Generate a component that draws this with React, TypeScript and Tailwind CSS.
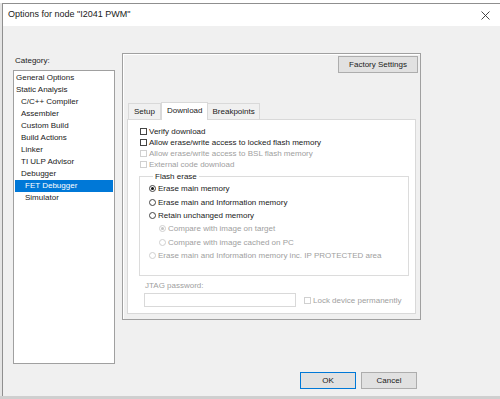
import React from "react";

const dim = "text-[#a0a0a0]";

const Check = ({ disabled }: { disabled?: boolean }) => (
  <span
    className={`block w-[7px] h-[7px] border bg-white shrink-0 ${disabled ? "border-[#d0d0d0]" : "border-[#444444]"}`}
  />
);

const Radio = ({ checked, disabled }: { checked?: boolean; disabled?: boolean }) => (
  <span
    className={`flex w-[7px] h-[7px] rounded-full border bg-white shrink-0 items-center justify-center ${disabled ? "border-[#cfcfcf]" : "border-[#444444]"}`}
  >
    {checked && <span className={`block w-[3px] h-[3px] rounded-full ${disabled ? "bg-[#c4c4c4]" : "bg-[#111111]"}`} />}
  </span>
);

const categories = [
  { label: "General Options", level: 0 },
  { label: "Static Analysis", level: 0 },
  { label: "C/C++ Compiler", level: 1 },
  { label: "Assembler", level: 1 },
  { label: "Custom Build", level: 1 },
  { label: "Build Actions", level: 1 },
  { label: "Linker", level: 1 },
  { label: "TI ULP Advisor", level: 1 },
  { label: "Debugger", level: 1 },
  { label: "FET Debugger", level: 2, selected: true },
  { label: "Simulator", level: 2 },
];

const CheckRow = ({ label, disabled }: { label: string; disabled?: boolean }) => (
  <div className={`flex items-center gap-[2px] h-[11px] ${disabled ? dim : "text-[#1a1a1a]"}`}>
    <Check disabled={disabled} />
    <span>{label}</span>
  </div>
);

const RadioRow = ({ label, checked, disabled, indent }: { label: string; checked?: boolean; disabled?: boolean; indent?: boolean }) => (
  <div className={`flex items-center gap-[2px] h-[13.4px] ${indent ? "pl-[10px]" : ""} ${disabled ? dim : "text-[#1a1a1a]"}`}>
    <Radio checked={checked} disabled={disabled} />
    <span>{label}</span>
  </div>
);

export default function App() {
  return (
    <div className="w-[500px] h-[399px] overflow-hidden bg-[#e4e4e4] font-['Liberation_Sans',Arial,sans-serif] flex flex-col">
      <div className="h-[3px] bg-white shrink-0" />
      <div className="ml-[2px] w-[600px] h-[393px] shrink-0 border-l border-t border-[#8f8f8f] bg-[#f0f0f0] flex flex-col">
        {/* title bar */}
        <div className="h-[22px] bg-white flex items-center shrink-0">
          <span className="pl-[5px] text-[9px] text-[#1a1a1a]">Options for node "I2041 PWM"</span>
          <svg className="ml-[351px]" width="9" height="9" viewBox="0 0 9 9">
            <path d="M0.5 0.5 L8.5 8.5 M8.5 0.5 L0.5 8.5" stroke="#333" strokeWidth="0.9" />
          </svg>
        </div>

        {/* body */}
        <div className="flex-1 flex flex-col text-[8px] leading-[11px] text-[#1a1a1a]">
          <div className="flex pt-[27px] pl-[10px]">
            {/* category column */}
            <div className="w-[102px] flex flex-col">
              <div className="h-[12px] mt-[2px] pl-[2px] leading-[12px]">Category:</div>
              <div className="mt-[3px] h-[294px] border border-[#a0a0a0] bg-white pt-[1px] px-[1px]">
                {categories.map((c) => (
                  <div
                    key={c.label}
                    className={`h-[12px] leading-[12px] ${c.selected ? "bg-[#0078d7] text-white" : ""} ${c.level === 0 ? "pl-[1px]" : c.level === 1 ? "pl-[6px]" : "pl-[10px]"}`}
                  >
                    {c.label}
                  </div>
                ))}
              </div>
            </div>

            {/* options group */}
            <div className="ml-[7px] w-[299px] h-[267px] border border-[#a0a0a0] shadow-[inset_1px_1px_0_#ffffff] flex flex-col px-[4px]">
              <div className="flex justify-end pt-[2px] -mr-[2px]">
                <div className="w-[80px] h-[17px] bg-[#e1e1e1] border border-[#adadad] flex items-center justify-center">
                  Factory Settings
                </div>
              </div>

              {/* tabs */}
              <div className="mt-[28px] flex items-end h-[18px] pl-[1px] relative z-10">
                <div className="h-[16px] px-[5px] flex items-center border border-b-0 border-[#d9d9d9] bg-[#f0f0f0]">Setup</div>
                <div className="h-[18px] px-[5px] flex items-center border border-b-0 border-[#d9d9d9] bg-white -mb-[1px] pb-[3px]">Download</div>
                <div className="h-[16px] px-[4px] flex items-center border border-b-0 border-l-0 border-[#d9d9d9] bg-[#f0f0f0]">Breakpoints</div>
              </div>
              <div className="h-[195px] border border-[#d9d9d9] bg-white flex flex-col pt-[6px] pl-[11px] pr-[6px]">
                <div className="pl-[1px]">
                  <CheckRow label="Verify download" />
                  <CheckRow label="Allow erase/write access to locked flash memory" />
                  <CheckRow label="Allow erase/write access to BSL flash memory" disabled />
                  <CheckRow label="External code download" disabled />
                </div>

                <fieldset className="mt-[1px] h-[105px] border border-[#dcdcdc] pl-[9px]">
                  <legend className="ml-[4px] px-[2px] leading-[11px]">Flash erase</legend>
                  <RadioRow label="Erase main memory" checked />
                  <RadioRow label="Erase main and Information memory" />
                  <RadioRow label="Retain unchanged memory" />
                  <RadioRow label="Compare with image on target" checked disabled indent />
                  <RadioRow label="Compare with image cached on PC" disabled indent />
                  <RadioRow label="Erase main and Information memory inc. IP PROTECTED area" disabled />
                </fieldset>

                <div className={`mt-[4px] pl-[6px] h-[11px] ${dim}`}>JTAG password:</div>
                <div className="mt-[2px] flex items-center pl-[5px]">
                  <div className="w-[152px] h-[14px] border border-[#d9d9d9] bg-white" />
                  <div className={`ml-[8px] flex items-center gap-[2px] ${dim}`}>
                    <Check disabled />
                    <span>Lock device permanently</span>
                  </div>
                </div>
              </div>
            </div>
          </div>

          {/* dialog buttons */}
          <div className="mt-[8px] w-[414px] flex justify-end gap-[5px]">
            <div className="w-[56px] h-[17px] bg-[#e1e1e1] border border-[#0078d7] flex items-center justify-center">OK</div>
            <div className="w-[56px] h-[17px] bg-[#e1e1e1] border border-[#adadad] flex items-center justify-center">Cancel</div>
          </div>
        </div>
      </div>
      <div className="flex-1 bg-[#cfcfcf]" />
    </div>
  );
}
